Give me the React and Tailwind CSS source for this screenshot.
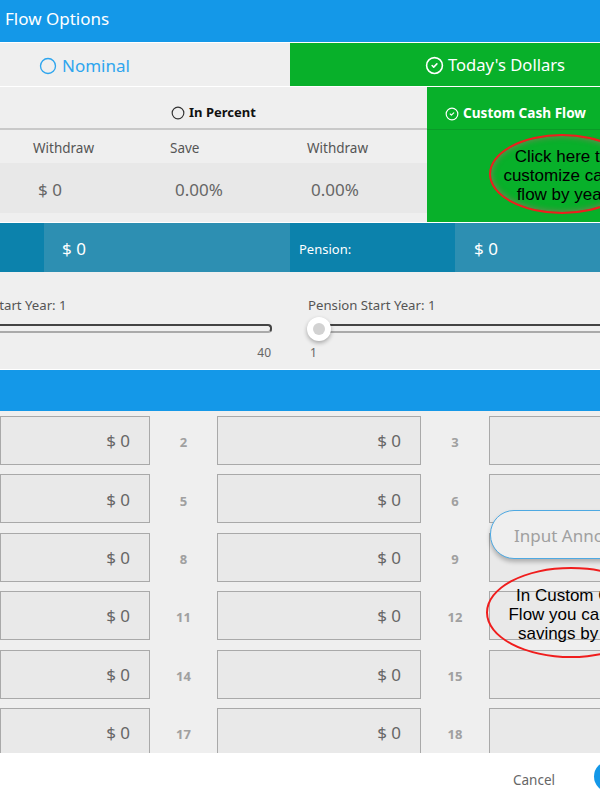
import { Circle, CircleCheck } from "lucide-react";

const rows = [
  [2, 3],
  [5, 6],
  [8, 9],
  [11, 12],
  [14, 15],
  [17, 18],
];

const YearInput = ({ value }) => (
  <div className="h-[49px] border border-[#a9a9a9] bg-[#e9e9e9] flex items-center justify-end pr-[19px] pt-[1px] text-[17px] text-[#666]">
    {value}
  </div>
);

const YearNumber = ({ children }) => (
  <div className="h-[49px] flex items-center justify-center pt-[5px] text-[13px] font-bold text-[#a0a0a0]">
    {children}
  </div>
);

export default function App() {
  return (
    <div className="relative w-[600px] h-[800px] overflow-hidden bg-white font-['Noto_Sans',sans-serif] text-[#555]">
      <div className="h-[42px] bg-[#1498e8] flex items-center pl-[5px] pb-[4px] text-[17px] text-white">
        Flow Options
      </div>

      <div className="mt-px h-[43px] flex text-[17px]">
        <div className="w-[290px] bg-[#efefef] flex items-center pl-[39px] pt-[2px] text-[#2ea5ee]">
          <Circle size={18} strokeWidth={1.8} className="mr-[5px]" />
          Nominal
        </div>
        <div className="flex-1 bg-[#08b02a] flex items-center pl-[135px] pt-[2px] text-white">
          <CircleCheck size={19} strokeWidth={2} className="mr-[4px]" />
          <span className="text-[16.6px]">Today's Dollars</span>
        </div>
      </div>

      <div className="mt-px flex h-[135px] bg-[#efefef]">
        <div className="w-[427px]">
          <div className="h-[43px] border-b-2 border-[#c9c9c9] flex items-center pl-[171px] pt-[11px] text-[13px] font-bold text-[#111]">
            <Circle size={14} strokeWidth={2} className="mr-[4px] text-[#333]" />
            In Percent
          </div>
          <div className="h-[33px] flex items-center pl-[33px] pt-[3px] text-[13.5px] text-[#555]">
            <span className="w-[137px]">Withdraw</span>
            <span className="w-[137px]">Save</span>
            <span>Withdraw</span>
          </div>
          <div className="h-[50px] bg-[#e8e8e8] flex items-center pl-[38px] pt-[4px] text-[17px] text-[#666]">
            <span className="w-[137px]">$ 0</span>
            <span className="w-[136px]">0.00%</span>
            <span>0.00%</span>
          </div>
        </div>
        <div className="flex-1 bg-[#08b02a]">
          <div className="h-[43px] border-b border-[#0a9a28] flex items-center pl-[18px] pt-[11px] text-[13.6px] font-bold text-white">
            <CircleCheck size={14} strokeWidth={2} className="mr-[4px]" />
            Custom Cash Flow
          </div>
        </div>
      </div>

      <div className="mt-px h-[49px] flex text-white">
        <div className="w-[44px] bg-[#0c82ac]" />
        <div className="w-[246px] bg-[#2d8fb2] flex items-center pl-[18px] pt-[2px] text-[17px]">$ 0</div>
        <div className="w-[165px] bg-[#0c82ac] flex items-center pl-[9px] pt-[4px] text-[13px]">Pension:</div>
        <div className="flex-1 bg-[#2d8fb2] flex items-center pl-[19px] pt-[2px] text-[17px]">$ 0</div>
      </div>

      <div className="h-[97px] bg-[#efefef] flex text-[13px] text-[#555]">
        <div className="w-[308px] pt-[24px]">
          <div className="h-[18px] leading-[18px] -ml-[8px] text-[13.2px]">Start Year: 1</div>
          <div className="mt-[10px] w-[272px] h-[9px] border-t-2 border-r-2 border-b-2 border-t-[#444] border-r-[#444] border-b-[#aaa] rounded-r-[4px]" />
          <div className="mt-[11px] w-[271px] text-right text-[12px] text-[#666]">40</div>
        </div>
        <div className="flex-1 pt-[24px]">
          <div className="h-[18px] leading-[18px] text-[13.2px]">Pension Start Year: 1</div>
          <div className="relative mt-[10px] ml-[10px] h-[9px] border-t-2 border-b-2 border-t-[#444] border-b-[#aaa]">
            <div className="absolute -left-[11px] -top-[9px] w-[24px] h-[24px] rounded-full bg-white shadow-[0_2px_4px_rgba(0,0,0,0.3)] flex items-center justify-center">
              <div className="w-[12px] h-[12px] rounded-full bg-[#d2d2d2]" />
            </div>
          </div>
          <div className="mt-[11px] pl-[2px] text-[12px] text-[#666]">1</div>
        </div>
      </div>

      <div className="mt-px h-[41px] bg-[#1498e8]" />

      <div className="h-[342px] overflow-hidden bg-[#efefef] pt-[5px]">
        <div className="w-[693px] grid grid-cols-[150px_67px_204px_68px_204px] gap-y-[9.4px]">
          {rows.map(([a, b]) => (
            <div key={a} className="contents">
              <YearInput value="$ 0" />
              <YearNumber>{a}</YearNumber>
              <YearInput value="$ 0" />
              <YearNumber>{b}</YearNumber>
              <YearInput value="" />
            </div>
          ))}
        </div>
      </div>

      <div className="h-[47px] bg-white flex items-center pl-[513px] text-[13.5px] text-[#666]">
        <span className="pt-[7px]">Cancel</span>
        <div className="ml-[39px] -mt-[1px] w-[80px] h-[31px] shrink-0 rounded-full bg-[#1498e8]" />
      </div>

      {/* annotations on top of the form */}
      <div className="absolute left-[489px] top-[134px] w-[146px] h-[80px] rounded-[50%] border-2 border-[#f01d1d] shadow-[inset_0_0_6px_rgba(170,110,110,0.8)] flex items-center justify-center pt-[3px] text-center font-['Liberation_Sans',sans-serif] text-[17px] leading-[19px] text-black whitespace-nowrap">
        <span>
          Click here to
          <br />
          customize cash
          <br />
          flow by year
        </span>
      </div>

      <div className="absolute left-[490px] top-[510px] w-[170px] h-[49px] rounded-l-[24px] border border-[#4ea9e2] bg-[#efefef] shadow-[0_3px_4px_rgba(0,0,0,0.25)] flex items-center pl-[23px] pt-[2px] text-[17px] text-[#a0a0a0] whitespace-nowrap">
        Input Annotation
      </div>

      <div className="absolute left-[486px] top-[567px] w-[170px] h-[91px] rounded-[50%] border-2 border-[#f01d1d] flex items-start justify-center pt-[17px] pl-[12px] text-center font-['Liberation_Sans',sans-serif] text-[17px] leading-[19px] text-black whitespace-nowrap">
        <span>
          In Custom Cash
          <br />
          Flow you can plan
          <br />
          savings by year
        </span>
      </div>
    </div>
  );
}
